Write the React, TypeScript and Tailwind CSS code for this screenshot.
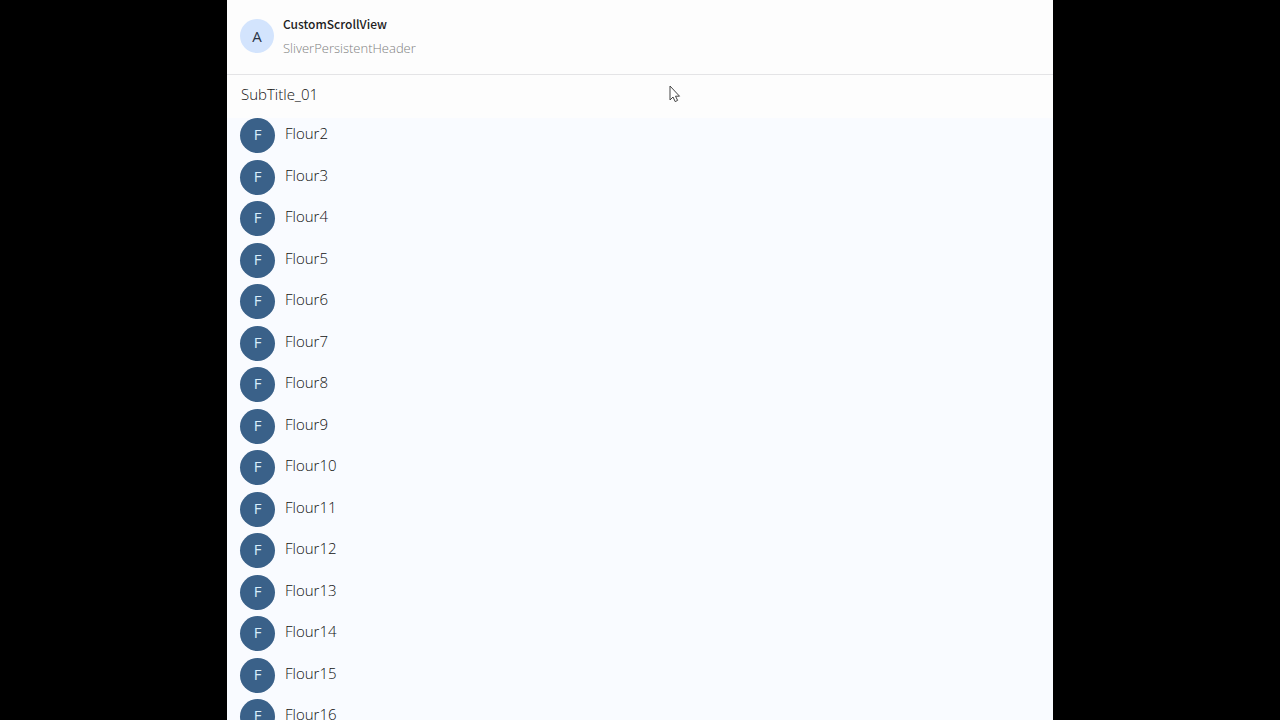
const items = Array.from({ length: 15 }, (_, i) => `Flour${i + 2}`);

function Header() {
  return (
    <header className="flex h-[75px] shrink-0 items-center gap-[9px] border-b border-[#e4e4e6] bg-[#fdfdfd] pb-[2px] pl-[13px]">
      <div className="flex size-[34px] items-center justify-center rounded-full bg-[#d3e4fd] text-[15px] text-[#2b3546]">
        A
      </div>
      <div>
        <h1 className="font-['Noto_Sans_CJK_KR',sans-serif] text-xs leading-6 font-medium text-[#222222]">
          CustomScrollView
        </h1>
        <p className="text-[13px] leading-6 font-light text-[#808080]">
          SliverPersistentHeader
        </p>
      </div>
    </header>
  );
}

function FlourRow({ title }: { title: string }) {
  return (
    <li className="flex items-start gap-[10px] odd:h-[42px] even:h-[41px]">
      <div className="flex size-[35px] shrink-0 items-center justify-center rounded-full bg-[#3a6189] pb-[2px] text-[15px] font-medium text-[#d8eefc]">
        F
      </div>
      <span className="text-[15px] leading-[30px] font-light text-[#111111]">
        {title}
      </span>
    </li>
  );
}

function Pointer() {
  return (
    <svg
      className="pointer-events-none absolute top-[85px] left-[669px] h-[18px] w-3"
      viewBox="0 0 12 18"
      fill="#ffffff"
      stroke="#444444"
      strokeLinejoin="round"
    >
      <path d="M1 1V15L4 12L6.2 16.6L8.6 15.4L6.5 11.2H10.5Z" />
    </svg>
  );
}

export default function App() {
  return (
    <div className="relative h-screen overflow-hidden bg-black px-[227px] font-['Open_Sans',sans-serif]">
      <main className="flex h-full flex-col overflow-hidden bg-[#f9fbff]">
        <Header />
        <h2 className="h-[43px] shrink-0 bg-[#fdfdfd] pl-[14px] text-[15px] leading-[38px] font-light text-[#111111]">
          SubTitle_01
        </h2>
        <ul className="pl-[13px]">
          {items.map((title) => (
            <FlourRow key={title} title={title} />
          ))}
        </ul>
      </main>
      <Pointer />
    </div>
  );
}
